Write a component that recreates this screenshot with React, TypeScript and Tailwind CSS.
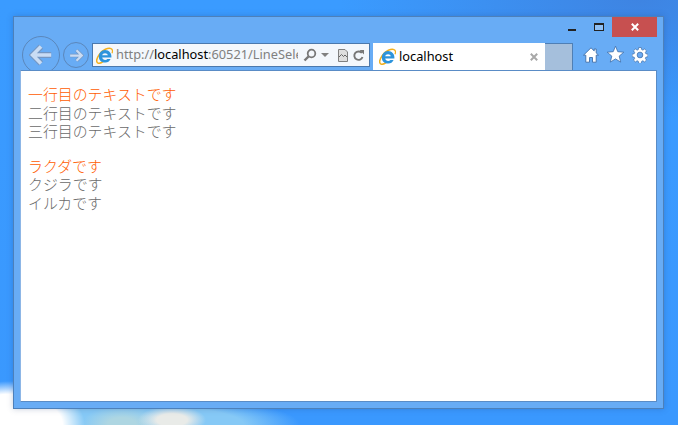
function IeLogo() {
  return (
    <svg width="17" height="17" viewBox="0 0 17 17" className="shrink-0">
      <path d="M15 1.600C12.500.4 6.500 2.500 3 7.800.8 11.200.3 14.600 1.500 15.700c1.100 1 3.500.4 5.500-1" fill="none" stroke="#f2b01e" strokeWidth="1.500" />
      <path d="M15 1.600c1.500.7 1.800 2.500 1 4.600" fill="none" stroke="#f2b01e" strokeWidth="1.200" />
      <path d="M9 3A6.200 6.200 0 0 0 2.800 9.500 6.200 6.200 0 0 0 14.600 12h-3.200c-1.300 1.800-4.900 1.300-5.200-1.400h9.200C16 6.400 13 3 9 3zM6.200 8.300c.3-2.700 5.200-2.900 5.700 0z" fill="#2d94dc" />
    </svg>
  )
}

function Arrow({ size, dir }: { size: number; dir: 'left' | 'right' }) {
  const d = dir === 'left' ? 'M18.500 10H4M10 3 3 10l7 7' : 'M1.500 10H16M10 3l7 7-7 7'
  return (
    <svg width={size} height={size} viewBox="0 0 20 20">
      <path d={d} fill="none" stroke="#7497c4" strokeWidth="4.800" />
      <path d={d} fill="none" stroke="#c9dcf4" strokeWidth="3" />
    </svg>
  )
}

function Home() {
  return (
    <svg width="16" height="16" viewBox="0 0 16 16">
      <path d="M8 .800.500 8.200h2.300v7h3.700v-4.700h3v4.700h3.700v-7h2.300l-2.300-2.300V2h-2v1.900z" fill="#fff" stroke="#3f6ea8" strokeWidth=".9" />
    </svg>
  )
}

function Star() {
  return (
    <svg width="17" height="17" viewBox="0 0 17 17">
      <path d="M8.500.2l2.300 5.500 6 .5-4.600 3.900 1.500 6-5.200-3.200-5.200 3.200 1.500-6L.2 6.200l6-.5z" fill="#fff" stroke="#3f6ea8" strokeWidth=".8" />
    </svg>
  )
}

function Gear() {
  return (
    <svg width="16" height="16" viewBox="0 0 18 18">
      <path
        d="M7.500.6h3l.4 2.300 1.300.6 2-1.300 2.100 2.100-1.300 2 .6 1.300 2.300.4v3l-2.300.4-.6 1.300 1.300 2-2.100 2.100-2-1.300-1.300.6-.4 2.300h-3l-.4-2.300-1.300-.6-2 1.300-2.100-2.100 1.300-2-.6-1.300-2.300-.4v-3l2.300-.4.6-1.300-1.300-2 2.100-2.100 2 1.300 1.300-.6z"
        fill="#fff"
        stroke="#3f6ea8"
        strokeWidth=".8"
      />
      <circle cx="9" cy="9" r="3.200" fill="#6aaaf3" stroke="#3f6ea8" strokeWidth=".9" />
    </svg>
  )
}

function Cross({ color, size }: { color: string; size: number }) {
  return (
    <svg width={size} height={size} viewBox="0 0 8 8">
      <path d="M.8.800l6.400 6.400M7.200.800.800 7.200" stroke={color} strokeWidth="2" fill="none" />
    </svg>
  )
}

function AddressBar() {
  return (
    <div className="flex h-[24px] w-[278px] items-center border border-[#4a78ad] bg-[#f3f7fc] pl-[3px]">
      <div className="w-[16px]">
        <IeLogo />
      </div>
      <div className="ml-[4px] w-[182px] overflow-hidden whitespace-nowrap font-['Noto_Sans',sans-serif] text-[12.800px] text-[#808080]">
        http://<span className="text-black">localhost</span>:60521/LineSelector
      </div>
      <svg width="14" height="14" viewBox="0 0 14 14" className="ml-[5px]">
        <circle cx="8.500" cy="5.500" r="3.800" fill="none" stroke="#777" strokeWidth="1.800" />
        <path d="M5.500 8.500 1.500 12.500" stroke="#777" strokeWidth="2.400" />
      </svg>
      <span className="ml-[4px] h-0 w-0 border-x-[4px] border-t-[4px] border-x-transparent border-t-[#808080]" />
      <svg width="10" height="13" viewBox="0 0 10 13" className="ml-[9px]">
        <path d="M.5.500h6.500l2.500 2.500v9.500H.5z" fill="#dedede" stroke="#808080" />
        <path d="M1 8l2.500-2.500 2 2 1.500-1.500 2 2" fill="none" stroke="#666" />
      </svg>
      <svg width="11" height="13" viewBox="0 0 11 13" className="ml-[5px]">
        <path d="M8.800 4A4.200 4.200 0 1 0 9.500 8" fill="none" stroke="#777" strokeWidth="1.900" />
        <path d="M6.500 1H11v4.500z" fill="#777" />
      </svg>
    </div>
  )
}

const firstGroup = ['一行目のテキストです', '二行目のテキストです', '三行目のテキストです']
const secondGroup = ['ラクダです', 'クジラです', 'イルカです']

function Lines({ items }: { items: string[] }) {
  return (
    <div className="text-[14.900px] font-light leading-[18.500px] text-[#6a6a6a]">
      {items.map((line, index) => (
        <div key={line} className={index === 0 ? 'text-[#ff5c00]' : ''}>
          {line}
        </div>
      ))}
    </div>
  )
}

export default function App() {
  return (
    <div className="h-[425px] w-[678px] overflow-hidden bg-[radial-gradient(ellipse_34px_14px_at_172px_420px,#e9ebe8_45%,transparent),radial-gradient(ellipse_40px_18px_at_122px_424px,#aed6e2_35%,transparent),radial-gradient(ellipse_75px_44px_at_10px_425px,#ffffff_70%,transparent),radial-gradient(ellipse_160px_30px_at_140px_425px,#86c9f6_65%,transparent),radial-gradient(ellipse_300px_120px_at_640px_0px,#3e84e2,transparent),linear-gradient(#3a9bff,#3a98fe)] pl-[13px] pt-[16px] font-['Noto_Sans_CJK_JP','Liberation_Sans',sans-serif]">
      <div className="flex h-[393px] w-[651px] flex-col border border-[#4d80ba] bg-[#68acf5] shadow-[0_0_6px_rgba(30,60,110,0.25)]">
        <div className="flex h-[26px] shrink-0 items-start justify-end pr-[6px]">
          <span className="mt-[12px] h-[2px] w-[8px] bg-[#222]" />
          <span className="ml-[18px] mt-[6px] h-[8px] w-[10px] border border-t-2 border-[#222] bg-[#8fc0f5]" />
          <div className="ml-[8px] flex h-[20px] w-[45px] items-center justify-center bg-[#c75050]">
            <Cross color="#fff" size={8} />
          </div>
        </div>
        <div className="flex h-[27px] shrink-0 items-end pl-[8px]">
          <div className="mb-[-4px] flex h-[38px] w-[38px] shrink-0 items-center justify-center rounded-full border border-[#5b87bb]">
            <Arrow size={24} dir="left" />
          </div>
          <div className="mb-[2px] ml-[3px] flex h-[26px] w-[26px] shrink-0 items-center justify-center rounded-full border border-[#5b87bb]">
            <Arrow size={15} dir="right" />
          </div>
          <div className="mb-[3px] ml-[3px] flex">
            <AddressBar />
          </div>
          <div className="ml-[3px] flex h-[27px] w-[172px] items-center bg-white pl-[6px]">
            <IeLogo />
            <span className="ml-[3px] flex-1 font-['Noto_Sans',sans-serif] text-[12.800px] text-black">localhost</span>
            <span className="mr-[7px]">
              <Cross color="#a8a8a8" size={8} />
            </span>
          </div>
          <div className="h-[27px] w-[28px] border-r border-t border-[#4f7fb5] bg-[#a5bfdc]" />
          <div className="mb-[7px] ml-[10px] flex items-center gap-[8px]">
            <Home />
            <Star />
            <Gear />
          </div>
        </div>
        <div className="relative z-10 mx-[6px] mb-[6px] flex-1 border border-[#5a8cc6] border-l-[#8db6e6] bg-white px-[7px] pt-[14px]">
          <Lines items={firstGroup} />
          <div className="h-[16px]" />
          <Lines items={secondGroup} />
        </div>
      </div>
    </div>
  )
}
